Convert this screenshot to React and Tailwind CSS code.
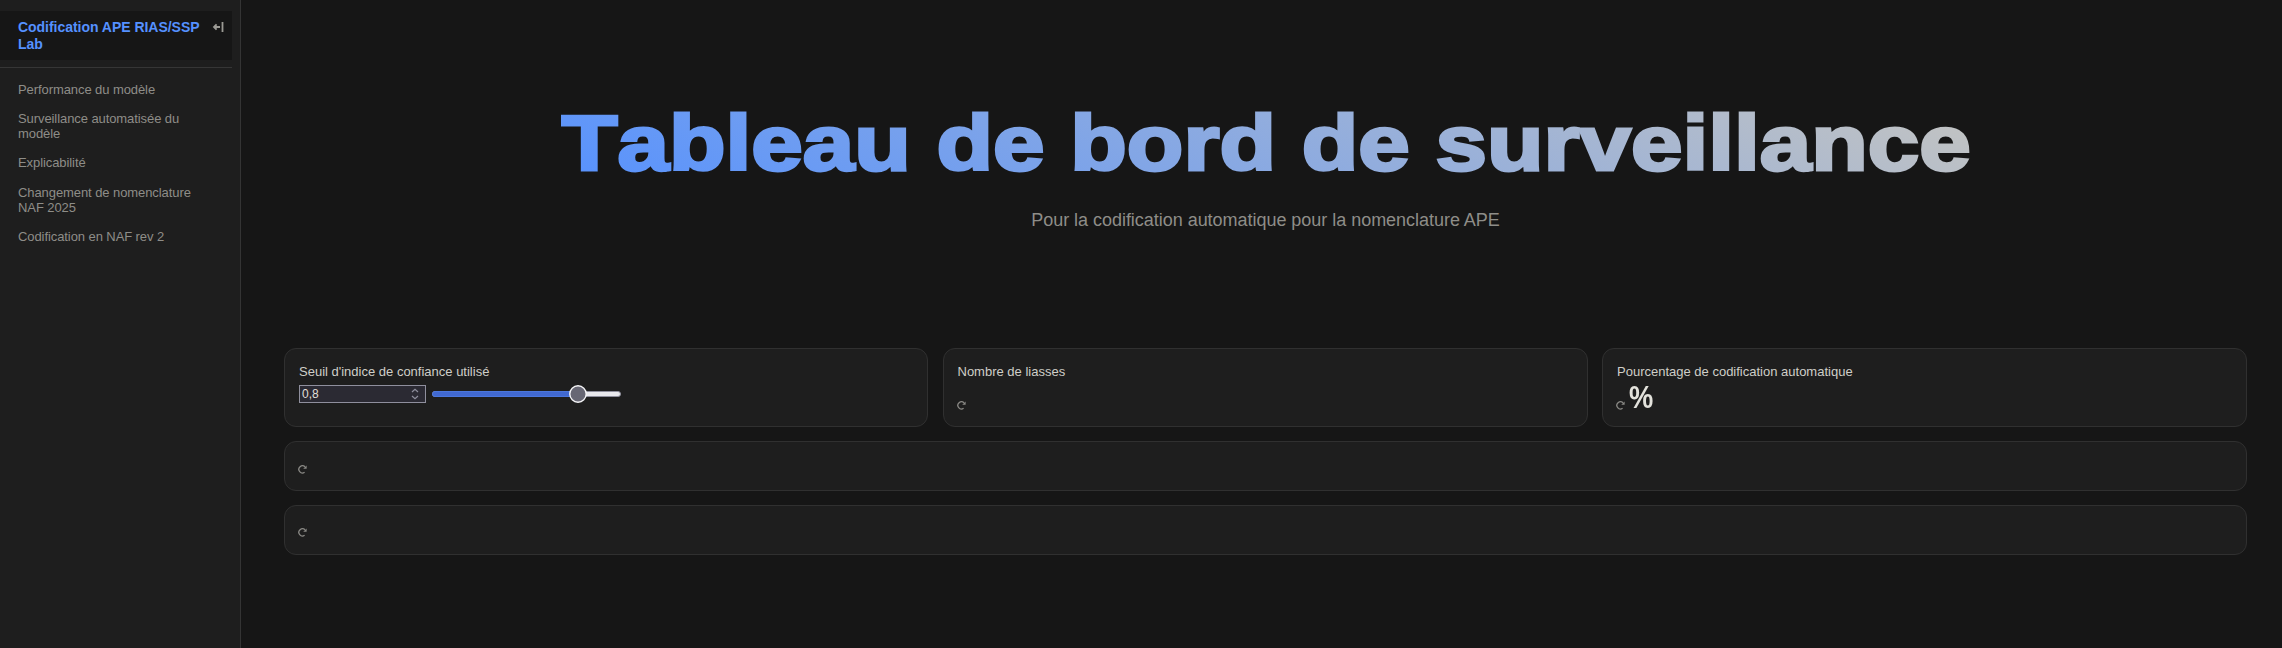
const links = [
  "Performance du modèle",
  "Surveillance automatisée du modèle",
  "Explicabilité",
  "Changement de nomenclature NAF 2025",
  "Codification en NAF rev 2",
];

function Loading({ className = "" }) {
  return (
    <svg className={`-ml-[2px] block h-3 w-3 shrink-0 ${className}`} viewBox="0 0 12 12" fill="none" stroke="#8a8985" strokeWidth="1.3">
      <path d="M7.6 9.3 A3.6 3.6 0 1 1 8 3.8" />
      <path d="M9.6 2.4 V5.8 H6.2 Z" fill="#8a8985" stroke="none" />
    </svg>
  );
}

function Card({ className = "", children }) {
  return <div className={`rounded-[12px] border border-[#303030] bg-[#1e1e1e] pl-[14px] ${className}`}>{children}</div>;
}

function Sidebar() {
  return (
    <aside className="w-[241px] shrink-0 border-r border-[#343434] bg-[#1e1e1e] pt-[11px]">
      <div className="mr-2 flex h-[49px] bg-[#161616] pl-[18px] pt-[8px]">
        <div className="w-[190px] text-[14px] font-bold leading-[17px] tracking-[-0.03px] text-[#5591ff]">Codification APE RIAS/SSP Lab</div>
        <svg className="mt-[2px] ml-[4px] block h-3 w-3" viewBox="0 0 12 12" fill="none" stroke="#9b9a94" strokeWidth="1.8">
          <path d="M8 6 H2 M4.6 3.4 L2 6 L4.6 8.6 M10.5 1 V11" />
        </svg>
      </div>
      <nav className="mr-2 mt-[7px] flex flex-col gap-[14.2px] border-t border-[#363636] pl-[18px] pt-[14px] text-[13px] leading-[15px] tracking-[-0.08px] text-[#8e8d88]">
        {links.map((l) => (
          <a key={l} className="w-[185px]">{l}</a>
        ))}
      </nav>
    </aside>
  );
}

export default function App() {
  return (
    <div className="flex h-[648px] w-[2282px] overflow-hidden bg-[#161616] font-['Liberation_Sans',Arial,sans-serif]">
      <Sidebar />
      <main className="flex flex-1 flex-col pl-[43px] pr-[35px]">
        <header className="flex h-[348px] flex-col items-center pt-[93px]">
          <h1 className="scale-x-[1.187] whitespace-nowrap bg-[linear-gradient(30deg,#5591ff,#c6c5c0)] bg-clip-text text-[78px] font-black leading-[100px] text-transparent [-webkit-text-stroke:3px_transparent] [font-kerning:none]">
            Tableau de bord de surveillance
          </h1>
          <p className="mt-[15px] text-[18px] leading-[24px] tracking-[-0.03px] text-[#8e8d88]">
            Pour la codification automatique pour la nomenclature APE
          </p>
        </header>
        <section className="grid grid-cols-[644px_645px_645px] gap-x-[14.5px] text-[13px] leading-[16px] text-[#cfcec8]">
          <Card className="h-[79px] pt-[15px]">
            <div>Seuil d'indice de confiance utilisé</div>
            <div className="mt-[4px] flex items-center">
              <div className="flex h-[18px] w-[127px] items-center justify-between border border-[#8f8f9d] bg-[#2b2a33] pl-[2px] pr-[6px] text-[12px]">
                <span className="text-[#e0dfd8]">0,8</span>
                <svg className="h-3 w-2" viewBox="0 0 8 12" fill="none" stroke="#8f8f9d" strokeWidth="1.2">
                  <path d="M1 4 L4 1.3 L7 4 M1 8 L4 10.7 L7 8" />
                </svg>
              </div>
              <svg className="ml-[6px] h-5 w-[190px]" viewBox="0 0 190 20">
                <rect x="0.5" y="7.5" width="188" height="5" rx="2.5" fill="#e9e9ed" stroke="#8f8f9d" />
                <rect x="0.5" y="7.5" width="149" height="5" rx="2.5" fill="#4169d1" stroke="#4a76dd" />
                <circle cx="146" cy="10" r="8.2" fill="#676774" stroke="#f4f4f6" strokeWidth="1.4" />
              </svg>
            </div>
          </Card>
          <Card className="h-[79px] pt-[15px]">
            <div>Nombre de liasses</div>
            <Loading className="mt-[19px]" />
          </Card>
          <Card className="h-[79px] pt-[15px]">
            <div>Pourcentage de codification automatique</div>
            <div className="flex">
              <Loading className="mt-[19px]" />
              <span className="mt-[2px] ml-[1.5px] origin-left scale-x-[0.88] text-[31px] font-bold leading-[32px] text-[#e3e2dc]">%</span>
            </div>
          </Card>
        </section>
        <Card className="mt-[14px] h-[50px] shrink-0 pt-[21px]">
          <Loading />
        </Card>
        <Card className="mt-[14px] h-[50px] shrink-0 pt-[20px]">
          <Loading />
        </Card>
      </main>
    </div>
  );
}
